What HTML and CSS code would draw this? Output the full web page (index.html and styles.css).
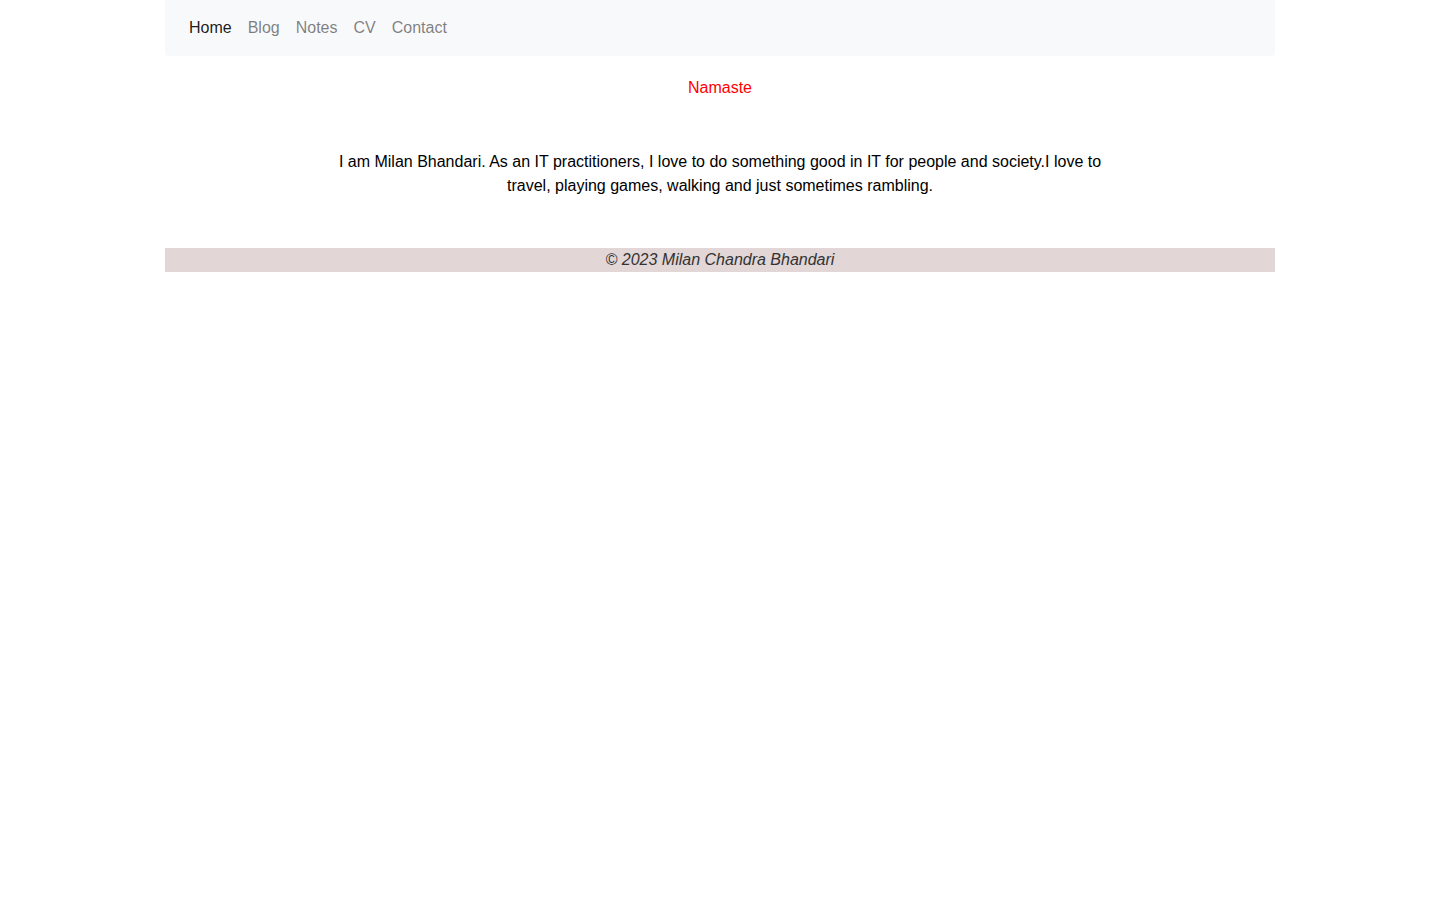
FILE: index.html
```html
<!DOCTYPE html>
<html lang="en">
<head>
<meta charset="utf-8">
<title>Milan Chandra Bhandari</title>
<link rel="stylesheet" href="styles.css">
</head>
<body>
<div class="container">
  <nav class="navbar">
    <ul class="nav">
      <li><a class="nav-link active" href="#">Home</a></li>
      <li><a class="nav-link" href="#">Blog</a></li>
      <li><a class="nav-link" href="#">Notes</a></li>
      <li><a class="nav-link" href="#">CV</a></li>
      <li><a class="nav-link" href="#">Contact</a></li>
    </ul>
  </nav>
  <main class="main">
    <p class="greeting">Namaste</p>
    <p class="intro">I am Milan Bhandari. As an IT practitioners, I love to do something good in IT for people and society.I love to travel, playing games, walking and just sometimes rambling.</p>
  </main>
  <footer class="footer">© 2023 Milan Chandra Bhandari</footer>
</div>
</body>
</html>
```

FILE: styles.css
```css
html, body {
  margin: 0;
  padding: 0;
  background: #fff;
  font-family: "Liberation Sans", Arial, sans-serif;
  font-size: 16px;
  line-height: 24px;
  color: #212529;
}
.container {
  width: 1110px;
  margin: 0 auto;
}
.navbar {
  background: #f8f9fa;
  height: 56px;
  padding: 0 16px;
  display: flex;
  align-items: center;
  border-radius: 0 0 4px 4px;
}
.nav {
  list-style: none;
  margin: 0;
  padding: 0;
  display: flex;
}
.nav-link {
  display: block;
  padding: 8px;
  color: rgba(0, 0, 0, 0.5);
  text-decoration: none;
}
.nav-link.active {
  color: rgba(0, 0, 0, 0.9);
}
.main {
  text-align: center;
  padding-top: 20px;
}
.greeting {
  margin: 0;
  color: #ff0000;
}
.intro {
  max-width: 780px;
  margin: 50px auto 0;
  color: #000;
}
.footer {
  margin-top: 50px;
  background: #e2d6d6;
  text-align: center;
  font-style: italic;
  color: #333;
  height: 24px;
}
```
